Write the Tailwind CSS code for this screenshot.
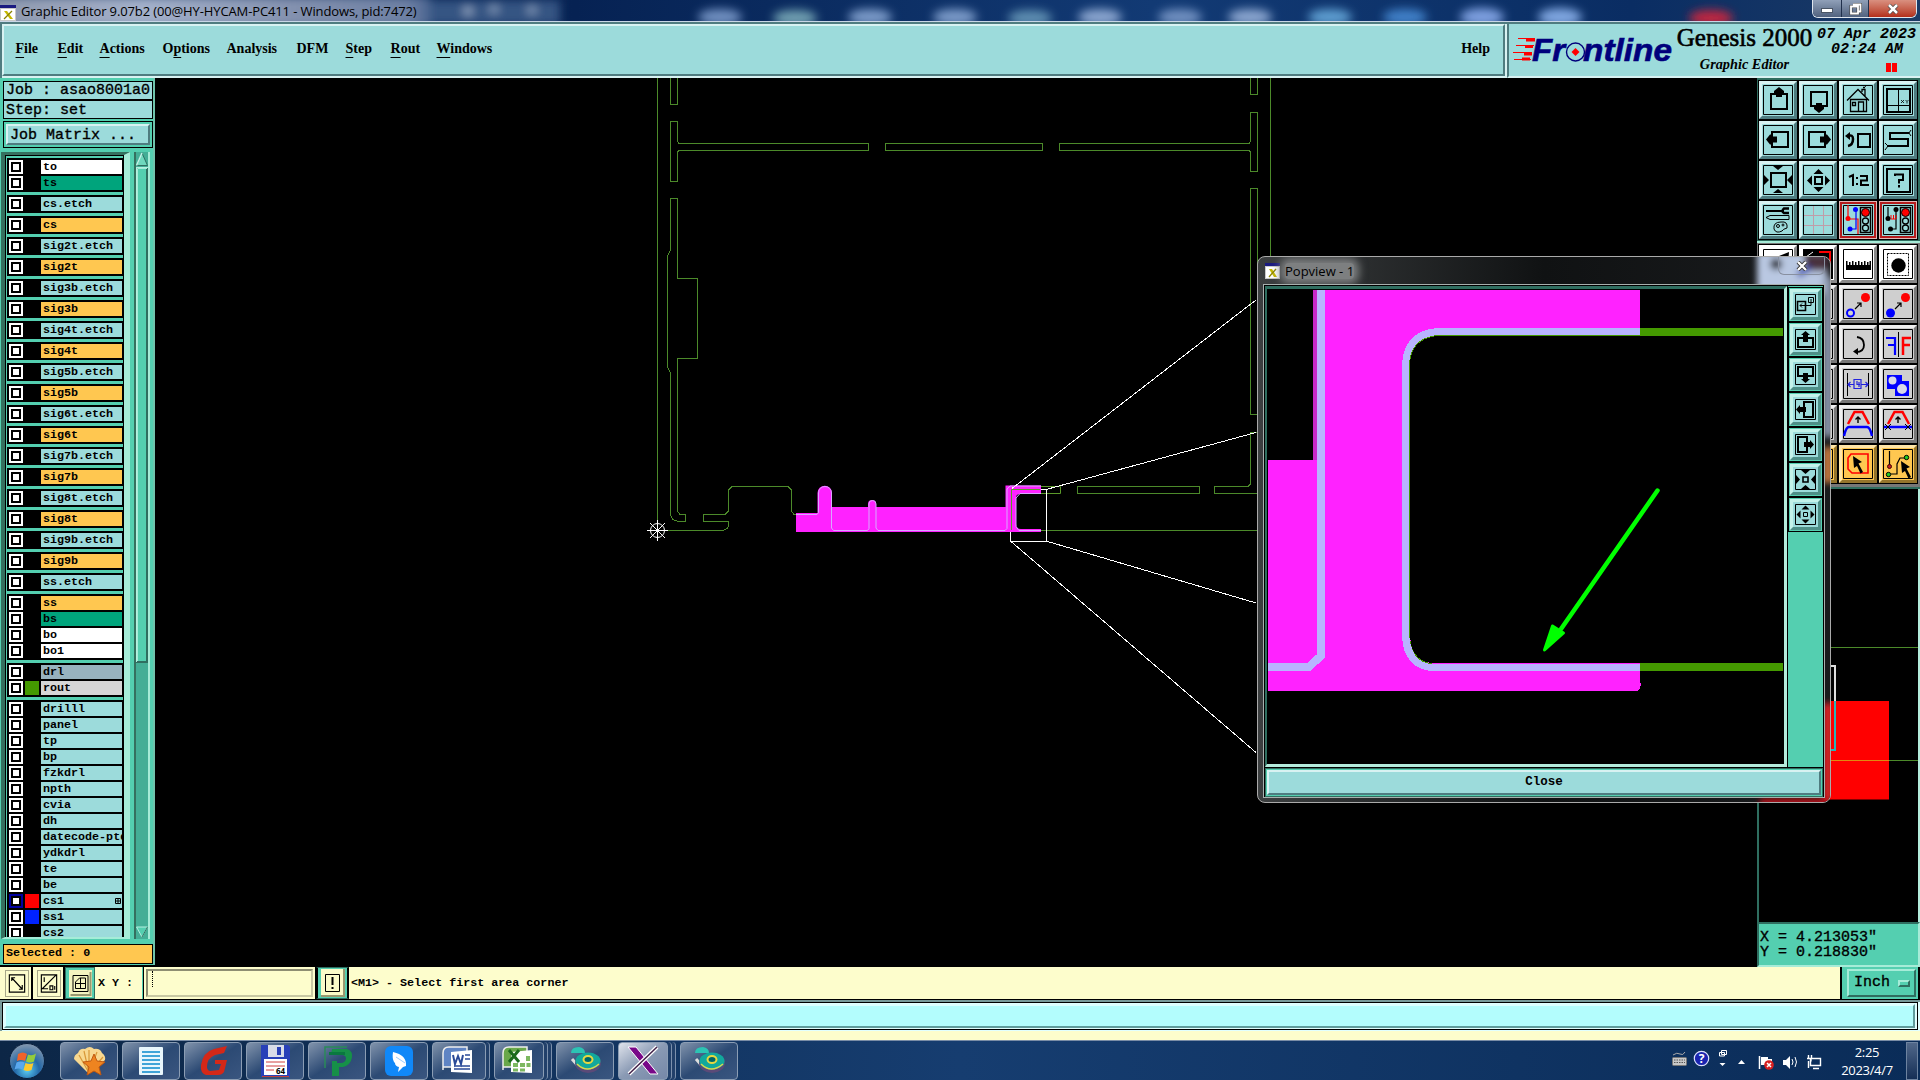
<!DOCTYPE html>
<html lang="en">
<head>
  <meta charset="UTF-8" />
  <meta name="viewport" content="width=device-width, initial-scale=1.0"/>
  <title>Graphic Editor</title>
  <script src="https://cdn.jsdelivr.net/npm/@tailwindcss/browser@4"></script>
</head>
<body class="bg-black w-[1920px] h-[1080px] overflow-hidden flex flex-col relative text-black font-['Liberation_Mono',monospace]">

  <!-- Title bar -->
  <header class="h-[22px] shrink-0 flex items-start justify-between border-b border-[#c9d6e6] bg-[#0c2a5a] relative overflow-hidden font-['Open_Sans',sans-serif]">
    <svg class="absolute inset-0" width="1920" height="21">
      <defs>
        <linearGradient id="haze" x1="0" x2="1" y1="0" y2="0">
          <stop offset="0" stop-color="#8d97ac"/><stop offset=".35" stop-color="#a3b0ca"/><stop offset=".7" stop-color="#8290ae"/><stop offset=".95" stop-color="#6d80a4"/><stop offset="1" stop-color="#4a6490"/>
        </linearGradient>
        <linearGradient id="titleBg" x1="0" x2="1" y1="0" y2="0">
          <stop offset="0" stop-color="#14345f"/><stop offset=".3" stop-color="#062253"/><stop offset=".6" stop-color="#123a74"/><stop offset=".85" stop-color="#0a2d63"/><stop offset="1" stop-color="#1c3b66"/>
        </linearGradient>
        <filter id="soft" x="-30%" y="-50%" width="160%" height="200%"><feGaussianBlur stdDeviation="5"/></filter>
      </defs>
      <rect width="1920" height="21" fill="url(#titleBg)"/>
      <g filter="url(#soft)">
        <rect x="430" y="0" width="130" height="25" fill="#345583"/>
        <rect x="-10" y="-4" width="440" height="32" fill="url(#haze)"/>
        <circle cx="468" cy="11" r="5" fill="#8da2c0"/><circle cx="494" cy="9" r="5" fill="#7d94b5"/><circle cx="532" cy="10" r="5" fill="#7d94b5"/>
        <ellipse cx="720" cy="17" rx="22" ry="8" fill="#6f8fc0"/><ellipse cx="795" cy="18" rx="22" ry="8" fill="#6f9fb0"/>
        <ellipse cx="870" cy="17" rx="22" ry="8" fill="#7a9ac8"/><ellipse cx="955" cy="17" rx="22" ry="8" fill="#7a9ac8"/>
        <ellipse cx="1030" cy="18" rx="22" ry="8" fill="#5d8db0"/><ellipse cx="1100" cy="17" rx="22" ry="8" fill="#8aa5cf"/>
        <ellipse cx="1180" cy="17" rx="22" ry="8" fill="#6f8fc0"/><ellipse cx="1250" cy="17" rx="22" ry="8" fill="#8aa5cf"/>
        <ellipse cx="1330" cy="17" rx="22" ry="8" fill="#5d9dd0"/><ellipse cx="1405" cy="17" rx="22" ry="8" fill="#3f80c8"/>
        <ellipse cx="1482" cy="17" rx="22" ry="9" fill="#7d9fdf"/><ellipse cx="1560" cy="17" rx="22" ry="9" fill="#7fa6e0"/>
        <ellipse cx="1711" cy="18" rx="22" ry="8" fill="#c02840"/>
      </g>
    </svg>
    <div class="relative flex items-center h-[21px]">
      <svg width="16" height="16" class="mt-1"><rect width="16" height="16" fill="#c8c8c8"/><rect width="16" height="3" fill="#1a1a80"/><rect x="1" y="4" width="14" height="11" fill="#fff"/><path d="M4 6h3l6 8h-3z" fill="#c5b800"/><path d="M12 6L4 14" stroke="#8a8200" stroke-width="1.3"/></svg>
      <span class="pl-[5px] text-[13px] leading-5 tracking-[-0.12px] whitespace-nowrap">Graphic Editor 9.07b2 (00@HY-HYCAM-PC411 - Windows, pid:7472)</span>
    </div>
    <div class="relative flex h-[18px] mr-[3px] border border-t-0 border-[#dfe6ee] rounded-b-md overflow-hidden">
      <div class="w-[29px] bg-linear-to-b from-[#90a0b8] to-[#52637f] border-r border-[#20304c] flex items-center justify-center pt-1"><i class="w-3 h-[5px] bg-white border border-gray-600"></i></div>
      <div class="w-[27px] bg-linear-to-b from-[#90a0b8] to-[#52637f] border-r border-[#20304c] flex items-center justify-center">
        <svg width="13" height="12" fill="none"><path d="M4 1.500h7.500v7h-2M2 3.500h7v7H2z" stroke="#444" stroke-width="3"/><path d="M4 1.500h7.500v7h-2M2 3.500h7v7H2z" stroke="#fff" stroke-width="1.800"/></svg>
      </div>
      <div class="w-[47px] bg-linear-to-b from-[#d99080] to-[#b32d18] flex items-center justify-center">
        <svg width="12" height="10"><path d="M2 1l8 8M10 1L2 9" stroke="#444" stroke-width="4"/><path d="M2 1l8 8M10 1L2 9" stroke="#fff" stroke-width="2.500"/></svg>
      </div>
    </div>
  </header>

  <!-- Menu bar and product logo -->
  <div class="h-14 shrink-0 flex font-['Liberation_Serif',serif] bg-[#d8f2f2]">
    <nav class="w-[1507px] border-t-2 border-l-2 border-[#4f7c80] border-b-0 flex pb-0.5 pr-0.5">
      <div class="flex-1 flex items-center bg-[#9cdbdb] border-2 border-t-[#d8f2f2] border-l-[#d8f2f2] border-b-[#4f7c80] border-r-[#4f7c80] pl-[11.500px] pr-[13px] pb-0.5 text-[14px] font-bold leading-5">
        <span class="w-[42px]"><u class="underline-offset-4">F</u>ile</span>
        <span class="w-[42px]"><u class="underline-offset-4">E</u>dit</span>
        <span class="w-[63px]"><u class="underline-offset-4">A</u>ctions</span>
        <span class="w-16">O<u class="underline-offset-4">p</u>tions</span>
        <span class="w-[70px]">Analysis</span>
        <span class="w-[49px]">DFM</span>
        <span class="w-[45px]"><u class="underline-offset-4">S</u>tep</span>
        <span class="w-[46px]"><u class="underline-offset-4">R</u>out</span>
        <span><u class="underline-offset-4">W</u>indows</span>
        <span class="ml-auto">Help</span>
      </div>
    </nav>
    <div class="flex-1 flex border-t-2 border-l-2 border-t-[#4f7c80] border-l-[#4f7c80] border-b-2 border-b-[#d8f2f2] bg-[#9cdbdb]">
      <svg width="162" height="52" viewBox="1509 24 162 52" class="overflow-visible shrink-0">
        <g stroke="#f00" fill="none"><path d="M1518 38.500h17M1516 45.500h18M1513 52.500h19M1514 59.500h17"/><path d="M1526 40h9M1525 46.500h8M1524 54h8M1522 59h8" stroke-width="3"/></g>
        <g font-family="Liberation Sans, sans-serif" font-weight="bold" font-style="italic" font-size="31" fill="#00007c" stroke="#00007c" stroke-width=".6">
          <text x="1532" y="60.500" textLength="33" lengthAdjust="spacingAndGlyphs">Fr</text>
          <text x="1583" y="60.500" textLength="89" lengthAdjust="spacingAndGlyphs">ntline</text>
        </g>
        <circle cx="1575.500" cy="52" r="9" fill="none" stroke="#00007c" stroke-width="1.400"/><path d="M1575.500 48l4 4-4 4-4-4z" fill="#f00"/>
      </svg>
      <div class="w-[143px] ml-0.5 flex flex-col items-center shrink-0">
        <span class="text-[25px] leading-7 whitespace-nowrap [-webkit-text-stroke:0.6px_black]">Genesis 2000</span>
        <span class="text-[14.300px] leading-5 pt-0.5 font-bold italic whitespace-nowrap">Graphic Editor</span>
      </div>
      <div class="flex-1 text-[15px] leading-[15px] italic pt-[3px] pr-1 font-['Liberation_Mono',monospace] font-bold whitespace-nowrap flex flex-col items-end">
        <span>07 Apr 2023</span>
        <span class="pr-[13px]">02:24 AM</span>
        <span class="flex gap-px mr-[19px] mt-[6px]"><i class="w-[5px] h-[9px] bg-[#f00]"></i><i class="w-[5px] h-[9px] bg-[#f00]"></i></span>
      </div>
    </div>
  </div>

  <main class="h-[889px] shrink-0 flex">
    <!-- Layer list -->
    <aside class="w-[155px] h-[887px] shrink-0 bg-[#54cfb0] px-[3px] pt-[3px] border-r-2 border-[#6fc4ac] flex flex-col">
      <div class="h-[19px] shrink-0 border border-black bg-[#9cdbdb] pl-0.5 text-[15px] leading-[18px] whitespace-pre w-[150px] [-webkit-text-stroke:0.35px_black]">Job : asao8001a0</div>
      <div class="h-[19px] shrink-0 border border-black bg-[#9cdbdb] pl-0.5 text-[15px] leading-[19px] whitespace-pre w-[150px] [-webkit-text-stroke:0.35px_black]">Step: set</div>
      <div class="h-[27px] shrink-0 mt-0.5 border border-black p-0.5 w-[150px]">
        <div class="h-full bg-[#9cdbdb] border-2 border-t-[#d8f2f2] border-l-[#d8f2f2] border-b-[#4f7c80] border-r-[#4f7c80] pl-0.5 text-[15px] leading-5 whitespace-pre [-webkit-text-stroke:0.35px_black]">Job Matrix ...</div>
      </div>
      <div class="h-[787px] shrink-0 mt-1 -ml-0.5 flex">
        <div class="w-[133px] flex border-l-4 border-t-3 border-l-[#35705f] border-t-[#35705f] border-b-2 border-b-[#a6ecd8] border-r-[6px] border-r-[#a6ecd8] overflow-hidden">
          <div id="layers" class="w-[121px] border-l border-t border-r border-black pt-0.5 pl-px flex flex-col gap-[3px] overflow-hidden"></div>
        </div>
        <div class="w-4 ml-1 bg-[#44ae96] border-l-2 border-r-2 border-l-[#35705f] border-r-[#a6ecd8] flex flex-col items-center justify-between">
          <svg width="12" height="511" class="shrink-0"><path d="M.5 13.500L6 1l5.500 12.500z" fill="#6fd8bd" stroke="#2f6e60"/><path d="M.5 13.500L6 1" stroke="#c0f5e8" stroke-width="1.500"/><rect y="15" width="12" height="496" fill="#2f6e60"/><path d="M0 15h12v1H1v494H0z" fill="#b4f0e0"/><rect x="2" y="17" width="8" height="492" fill="#54cfb0"/><path d="M1.500 509V16.500H11" fill="none" stroke="#a6ecd8"/></svg>
          <svg width="12" height="13" class="shrink-0"><path d="M.5 1h11L6 11z" fill="#54cfb0" stroke="#b4f0e0"/><path d="M11.500 1L6 11" stroke="#2f6e60"/></svg>
        </div>
      </div>
      <div class="h-5 shrink-0 mt-[5px] w-[150px] border border-black bg-[#ffc750] pl-0.5 text-[11.700px] font-bold leading-[17px] whitespace-pre">Selected : 0</div>
    </aside>

    <!-- Drawing area -->
    <svg width="1602" height="889" viewBox="155 78 1602 889" class="shrink-0">
      <g fill="none" stroke="#4c8a2a" stroke-width="1" shape-rendering="crispEdges">
        <path d="M657.500 78V530.500H722Q728.500 530 728.500 524V521.500H703.500V514.500H725L728.500 511V490L732 486.500H788L791.500 490V511L794 514.500H818"/>
        <path d="M670.500 78V104.500H677.500V78M1250.500 78V94.500H1257.500V78M1270.500 78V530.500H876"/>
        <path d="M677.500 141V121.500H670.500V181.500H677.500V152L679 150.500H868.500V143.500H679z"/>
        <path d="M885.500 143.500H1042.500V150.500H885.500zM1249 143.500H1059.500V150.500H1249L1250.500 152V171.500H1257.500V112.500H1250.500V141z"/>
        <path d="M677.500 278.500V198.500H670.500V250L667.500 256V367L670.500 373V512Q670.500 521.500 680 521.500H685.500V514.500H680L677.500 511V358.500H697.500V278.500z"/>
        <path d="M1250.500 188.500H1257.500V414.500H1250.500zM1250.500 484V432.500H1257.500V493.500H1214.500V486.500H1248zM1077.500 486.500H1199.500V493.500H1077.500z"/>
      </g>
      <path d="M796 513h21.500V493a7 7 0 0 1 14.500 0v14h36v-3a4 4 0 0 1 8 0v3h129.500V485.500H1041V494h-21q-4 0-4 4v26q0 5 5 5h20v3H796z" fill="#ff22ff"/>
      <g fill="none" stroke="#d8a8ff"><path d="M796 514.500h21l1.500-2V493a6.500 6.500 0 0 1 13 0v35l2 2.500h34l1.500-2V504a3.500 3.500 0 0 1 7 0v24l2 2.500h127l2-2V489l3-3H1041M1041 530.500h-22l-3-4V498l4-4.500H1041"/></g>
      <path d="M1011.500 530V489.500H1040M1041 486.500h19.500v7H1041" fill="none" stroke="#5b9a2a"/>
      <g fill="none" stroke="#fff" shape-rendering="crispEdges"><path d="M1041 489.500h5.500v51.500H1010.500V532"/><path d="M1012 488.500L1256 300M1046 489.500L1256 432.500M1046 541L1256 603M1010.500 541L1256 752.500"/></g>
      <g fill="none" stroke="#fff"><circle cx="657.500" cy="530.500" r="7"/><path d="M647 530.500h21M657.500 520v21M650 523l15 15M665 523l-15 15"/></g>
    </svg>

    <!-- Tool buttons, overview and coordinates -->
    <aside class="w-[163px] shrink-0 flex flex-col">
      <div class="h-[165px] shrink-0 bg-[#2f6e60] border-b-2 border-[#a6ecd8] pl-px pt-0.5">
        <div id="viewTools" class="w-40 h-40 grid grid-cols-[repeat(4,38px)] content-start bg-black pt-px pl-px gap-0.5"></div>
      </div>
      <div class="h-[246px] shrink-0 bg-[#777] pl-px pt-px border-b-2 border-[#2f6e60]">
        <div id="editTools" class="w-40 h-60 grid grid-cols-[repeat(4,38px)] content-start bg-black pt-px pl-px gap-0.5"></div>
      </div>
      <div class="h-[433px] shrink-0 border-l-2 border-l-[#2f6e60] border-r-2 border-r-[#b4ecdc]">
        <svg width="159" height="433" viewBox="1759 489 159 433">
          <rect x="1759" y="701" width="130" height="98.500" fill="#f00"/>
          <path d="M1759 647.500h159" stroke="#4c8a2a"/><path d="M1759 760.500h130" stroke="#e08a10"/><path d="M1889 760.500h29" stroke="#4c8a2a"/>
          <path d="M1830 666h5v35" fill="none" stroke="#ddd" stroke-width="2"/><path d="M1835 701v49h-5" fill="none" stroke="#28b4b8" stroke-width="2"/>
        </svg>
      </div>
      <div class="h-[45px] shrink-0 border-2 border-t-[#2f6e60] border-l-[#2f6e60] border-b-[#a6ecd8] border-r-[#a6ecd8] bg-[#54cfb0] pl-px pt-[6px] text-[15px] leading-[15px] whitespace-pre [-webkit-text-stroke:0.35px_black]">X = 4.213053"<br>Y = 0.218830"</div>
    </aside>
  </main>

  <!-- Status row -->
  <section class="h-[33px] shrink-0 flex bg-[#fdfdcc] border-b border-black text-[11.700px]">
    <div class="w-[33px] border-r-2 border-black flex items-center justify-center pl-0.5"><svg width="24" height="27" class="border border-[#a8a888]" viewBox="-1.500 -2.500 23 26"><path d="M2 1.500h16v18H2zM4.500 4.500l11 12M4.500 8V4.500H8M15.500 12v4.500H12" fill="none" stroke="#000" stroke-width="1.200"/></svg></div>
    <div class="w-8 border-r-2 border-black flex items-center justify-center pl-px"><svg width="24" height="27" class="border border-[#a8a888]" viewBox="-1.500 -2.500 23 26"><path d="M2 1.500h16v18H2zM17 2L3 16h6M5 4v5M11 13h3v4h-3zM16 13v4" fill="none" stroke="#000" stroke-width="1.200"/></svg></div>
    <div class="w-[30px] bg-[#54cfb0] border border-[#2f6e60] flex items-center justify-center"><svg width="23" height="27" viewBox="-1.500 -3 23 27"><path d="M-1.500-3h23v27h-23z" fill="#f3f3c0"/><path d="M20 -1v23H0" fill="none" stroke="#999970" stroke-width="2"/><path d="M2.500 2.500h15v16h-15zM5 15.500V9l4-4h6v10.500zM5 10.500h10M10 5v10.500" fill="none" stroke="#000"/></svg></div>
    <div class="w-12 border-r border-[#54cfb0] pl-[3px] leading-[33px] font-bold whitespace-pre">X Y :</div>
    <div class="w-[173px] p-0.5 border-x border-black">
      <div class="h-full border-2 border-t-[#8e8e72] border-l-[#8e8e72] border-b-[#c9c9a3] border-r-[#c9c9a3] pl-1"><i class="block w-px h-4 border-l border-dotted border-black"></i></div>
    </div>
    <div class="w-[33px] bg-[#54cfb0] border-x-2 border-x-black border-y border-y-[#2f6e60] flex items-center justify-center"><svg width="24" height="28"><path d="M0 0h24v28H0z" fill="#fbfbc8"/><path d="M23 0v27H0" fill="none" stroke="#999970" stroke-width="2"/><path d="M4.500 5.500h14v17h-14z" fill="none" stroke="#000"/><path d="M11.500 8v8M11.500 18v2" stroke="#000" stroke-width="2"/></svg></div>
    <div class="flex-1 pl-0.5 leading-[33px] font-bold whitespace-pre">&lt;M1&gt; - Select first area corner</div>
    <div class="w-20 bg-[#54cfb0] border-x-2 border-black p-0.5 pl-[5px]">
      <div class="h-full border-2 border-t-[#a6ecd8] border-l-[#a6ecd8] border-b-[#2f6e60] border-r-[#2f6e60] flex items-center justify-between pl-[5px] pr-1 text-[15px] [-webkit-text-stroke:0.35px_black]">Inch<i class="w-3 h-[7px] border-2 border-t-[#a6ecd8] border-l-[#a6ecd8] border-b-[#2f6e60] border-r-[#2f6e60]"></i></div>
    </div>
  </section>
  <section class="h-10 shrink-0 bg-[#fdfdcc] pb-[9px]">
    <div class="h-full border-t-2 border-l-2 border-[#789a9a] bg-[#e0ffff] pr-0.5 pb-px"><div class="h-full border border-black p-px pr-0.5"><div class="h-full border-2 border-[#dcffff] border-b-[#5f9c9c] border-r-[#5f9c9c] bg-[#b3fdfd]"></div></div></div>
  </section>

  <!-- Taskbar -->
  <footer class="h-10 shrink-0 flex items-center bg-linear-to-r from-[#0c2646] via-[#163d70] to-[#0a2c58] border-t border-[#7a8da6] font-['Open_Sans',sans-serif] text-white">
    <div class="w-[60px] flex pl-2">
      <svg width="38" height="38" viewBox="0 0 38 38">
        <defs><radialGradient id="orb" cx=".5" cy=".75" r=".7"><stop offset="0" stop-color="#5cd0f5"/><stop offset=".5" stop-color="#2368a8"/><stop offset="1" stop-color="#7c93ad"/></radialGradient></defs>
        <circle cx="19" cy="19" r="17.500" fill="url(#orb)" stroke="#0a1f3c"/>
        <path d="M10 12q5-3 9 0l-2 7q-4-2-8 0z" fill="#f0632a"/><path d="M20 12.500q4 2 8-1l-2 8q-4 2-8 0z" fill="#94cc3c"/><path d="M8.500 20.500q4-2 8 0l-2 7q-4-2-8 0z" fill="#5aa8ee"/><path d="M17.500 21q4 2 8 0l-2 7q-4 2-8 0z" fill="#fcc92c"/>
      </svg>
    </div>
    <div id="tasks" class="flex h-[38px]"></div>
    <div class="ml-auto flex items-center h-full">
      <svg width="230" height="38" viewBox="1600 1041 230 38" class="mr-2">
        <rect x="1672.500" y="1056.500" width="14" height="8" rx="1" fill="#c8c8c8" stroke="#777"/><path d="M1674 1059h11M1674 1061.500h11" stroke="#555" stroke-dasharray="1.500 1"/><path d="M1673 1054q4-3 7-1t5-2" fill="none" stroke="#aaa"/>
        <circle cx="1701.500" cy="1057.500" r="7.200" fill="#1a24b0" stroke="#dfe4ff" stroke-width="1.200"/><text x="1701.500" y="1062" text-anchor="middle" font-size="12" font-weight="bold" fill="#fff">?</text>
        <path d="M1721.500 1049.500h5v4h-5zM1719.500 1051.500h5v3.500h-5z" fill="none" stroke="#fff"/><path d="M1719.500 1062h6l-3 3z" fill="#fff"/>
        <path d="M1738 1063h7l-3.500-4z" fill="#fff"/>
        <path d="M1759.500 1055v13" stroke="#fff" stroke-width="1.500"/><path d="M1761 1056h7v2h4v6h-11z" fill="#fff"/><circle cx="1769" cy="1064" r="4.800" fill="#d82020"/><path d="M1767 1062l4 4M1771 1062l-4 4" stroke="#fff" stroke-width="1.500"/>
        <path d="M1783 1059h3l4-4v13l-4-4h-3z" fill="#fff"/><path d="M1792 1058q2 3 0 6M1795 1056q3 5 0 10" fill="none" stroke="#fff"/>
        <path d="M1810.500 1057.500h10v7h-10zM1813 1067.500h6M1808.500 1054v3M1811.500 1054v3M1807 1057.500h4v3M1808.500 1060v7" fill="none" stroke="#fff" stroke-width="1.400"/>
      </svg>
      <div class="w-[58px] text-center text-[13px] leading-[18px] tracking-[-0.3px]"><div>2:25</div><div>2023/4/7</div></div>
      <div class="w-3 h-[38px] ml-[10px] mr-0.5 border border-[#6d83a0] bg-linear-to-b from-[#51688a] to-[#152f56]"></div>
    </div>
  </footer>

  <!-- Popview window -->
  <div class="absolute left-[1257px] top-[256px] w-[574px] h-[547px] rounded-lg border border-[#aaa] bg-linear-to-r from-[#3c3f40] via-[#101213] to-[#191b1d] overflow-hidden">
    <svg class="absolute right-0 top-0" width="90" height="545">
      <defs><filter id="soft2" x="-50%" y="-50%" width="200%" height="200%"><feGaussianBlur stdDeviation="3"/></filter></defs>
      <g filter="url(#soft2)"><rect x="17" y="-5" width="70" height="42" fill="#b9c8e2"/><circle cx="36" cy="7" r="6" fill="#30343c"/><rect x="64" y="-4" width="24" height="18" fill="#48303c"/><path d="M58 18l12-8" stroke="#2a3fae" stroke-width="6"/>
      <rect x="83" y="20" width="10" height="160" fill="#8c98ae"/><rect x="83" y="190" width="10" height="36" fill="#c8783c"/><rect x="83" y="446" width="10" height="110" fill="#e02028"/><rect x="20" y="541" width="70" height="10" fill="#b01018"/></g>
    </svg>
    <div class="relative h-[27px] flex items-start justify-between pl-[7px] pr-[5px]">
      <div class="flex items-center gap-[5px] pt-[6px]">
        <svg width="15" height="16"><rect width="15" height="16" fill="#c8c8c8"/><rect width="15" height="3" fill="#1a1a80"/><rect x="1" y="4" width="13" height="11" fill="#fff"/><path d="M4 6h3l5 8H9z" fill="#c5b800"/><path d="M11 6L4 14" stroke="#8a8200" stroke-width="1.300"/></svg>
        <span class="font-['Open_Sans',sans-serif] text-[13px] leading-4 bg-[#7d7f80] shadow-[0_0_8px_5px_#7d7f80] rounded">Popview - 1</span>
      </div>
      <div class="w-[47px] h-[18px] border border-t-0 border-[#8890a0] rounded-b-md flex items-center justify-center">
        <svg width="12" height="10"><path d="M2 1l8 8M10 1L2 9" stroke="#333" stroke-width="4"/><path d="M2 1l8 8M10 1L2 9" stroke="#fff" stroke-width="2.300"/></svg>
      </div>
    </div>
    <div class="relative ml-[5px] w-[562px] h-[514px] border border-[#a8b0ae] bg-black p-px flex flex-col">
      <div class="h-[481px] shrink-0 flex">
        <div class="w-[522px] border-l-2 border-t-[3px] border-l-[#2f6e60] border-t-[#2f6e60] border-b-[3px] border-r-[3px] border-b-[#b4ecdc] border-r-[#b4ecdc]">
          <svg width="517" height="475" viewBox="1267 289 517 475" shape-rendering="crispEdges">
            <path d="M1268 290h372v391q2 6-2 10H1268V460h45V290z" fill="#ff22ff"/><path d="M1313 290h4v170h-4z" fill="#c828c8"/>
            <path d="M1321 290v366l-12.500 11H1268" fill="none" stroke="#b8b4ff" stroke-width="8"/>
            <path d="M1437 328H1783v8H1437q-27 3-27 30V634q0 26 24 30H1640v-1H1783v8H1431q-27-3-29-34V364q2-33 35-36z" fill="#449900"/>
            <path d="M1437 328H1640v7H1437q-27 3-28 30V634q2 28 22 30H1640v7H1431q-27-3-29-34V364q2-33 35-36z" fill="#b8b4ff"/>
            <path d="M1437 336H1640V663H1431q-21-3-21-30V366q0-27 27-30z" fill="#000"/>
            <path d="M1640 336h143v327h-143z" fill="#000"/>
            <g shape-rendering="auto"><path d="M1657.500 490.500L1561 629" stroke="#0f0" stroke-width="4.500" stroke-linecap="round"/><path d="M1544.500 650L1552.500 626L1563.500 633z" fill="#0f0" stroke="#0f0" stroke-width="3" stroke-linejoin="round"/></g>
          </svg>
        </div>
        <div id="popTools" class="w-[35px] ml-px pt-px bg-[#54cfb0] flex flex-col"></div>
      </div>
      <div class="flex-1 mt-px bg-[#54cfb0] border border-[#2f6e60] p-px">
        <div class="h-full bg-[#9cdbdb] border-2 border-t-[#d8f2f2] border-l-[#d8f2f2] border-b-[#4f7c80] border-r-[#4f7c80] text-center text-[12.500px] font-bold leading-[21px]">Close</div>
      </div>
    </div>
  </div>

  <script>
    // [name, colour, swatch] per row, grouped as in the job matrix
    const T = "bg-[#9cdbdb]", Y = "bg-[#ffc750]", G = "bg-[#00a47c]", W = "bg-white";
    const groups = [[["to", W], ["ts", G]], [["cs.etch", T]], [["cs", Y]]];
    ["2t", "3b", "4t", "5b", "6t", "7b", "8t", "9b"].forEach(n => {
      groups.push([["sig" + n + ".etch", T]], [["sig" + n, Y]]);
    });
    groups.push([["ss.etch", T]]);
    groups.push([["ss", Y], ["bs", G], ["bo", W], ["bo1", W]]);
    groups.push([["drl", "bg-[#98b2be]"], ["rout", "bg-[#d6d6d6]", "bg-[#449900]"]]);
    groups.push(["drilll", "panel", "tp", "bp", "fzkdrl", "npth", "cvia", "dh", "datecode-ptd", "ydkdrl", "te", "be"].map(n => [n, T])
      .concat([["cs1", T, "bg-[#ff0000]"], ["ss1", T, "bg-[#0022ff]"], ["cs2", T]]));

    document.getElementById("layers").innerHTML = groups.map(g =>
      `<div class="w-[117px] shrink-0 bg-black p-0.5 flex flex-col gap-0.5">` + g.map(([name, bg, sw]) =>
        `<div class="h-[14px] flex gap-0.5">
          <div class="w-[14px] p-0.5 ${name === "cs1" ? "bg-[#0000a0]" : "bg-white"}"><div class="h-[10px] border-2 border-black bg-white"></div></div>
          <div class="w-[14px] ${sw || ""}"></div>
          <div class="w-[81px] pl-0.5 overflow-hidden whitespace-nowrap text-[11.700px] font-bold leading-[14px] flex justify-between ${bg}">${name}${name === "cs1" ? `<svg width="6" height="6" class="mt-1 mr-px shrink-0"><path d="M.5 .5h5v5h-5zM3 0v6M0 3h6" fill="none" stroke="#000"/></svg>` : ""}</div>
        </div>`).join("") + `</div>`).join("");

    const k = `fill="none" stroke="#000"`;
    const arrow = {
      up: (x, y) => `<path d="M${x} ${y}l5 4v2h-2v4h-6v-4h-2v-2z"/>`,
      down: (x, y) => `<path d="M${x} ${y}l5-4v-2h-2v-4h-6v4h-2v2z"/>`,
      left: (x, y) => `<path d="M${x} ${y}l4-5h2v2h5v6h-5v2h-2z"/>`,
      right: (x, y) => `<path d="M${x} ${y}l-4-5h-2v2h-5v6h5v2h2z"/>`
    };
    const lights = `<path d="M17.500 2.500h10v25h-10z" fill="#9cdbdb" stroke="#000" stroke-width="1.500"/><circle cx="22.500" cy="7.500" r="4" fill="#f00" stroke="#000"/><circle cx="22.500" cy="16" r="3" ${k} stroke-width="1.300"/><circle cx="22.500" cy="23" r="3" ${k} stroke-width="1.300"/>`;

    const viewIcons = [
      `<path d="M8 9h16v15H8z" ${k} stroke-width="2"/>` + arrow.up(16, 2),
      `<path d="M8 7h16v14H8z" ${k} stroke-width="2"/>` + arrow.down(16, 28),
      `<path d="M4 15.500L15 4.500l11 11M7.500 14.500h16v12h-16zM15.500 26v-9h5v9M9.500 17.500h3v3h-3zM19 7V4.500h3V11M20 2.500h2M22 1h1" ${k} stroke-width="1.300"/>`,
      `<path d="M4 4h23v23H4z" ${k} stroke-width="2"/><path d="M15.500 4v23M4 20.500h23" ${k}/><path d="M18 15l3 3M21 15l-3 3M22.500 15l1.500 1.500 1.500-1.500M24 16.500v2" ${k} stroke-width=".8"/>`,
      `<path d="M9 7h16v15H9z" ${k} stroke-width="2"/>` + arrow.left(3, 14.500),
      `<path d="M6 7h16v15H6z" ${k} stroke-width="2"/>` + arrow.right(28, 14.500),
      `<path d="M15 9h12v13H15z" ${k} stroke-width="2"/><path d="M5 11q5-2 5 3 0 6-5 7" ${k} stroke-width="2.500"/><path d="M2 11l5-4v8z"/>`,
      `<path d="M26 8H7v6h18v7H4" ${k} stroke-width="2"/><path d="M26 8l2-3M26 8l2 3M5 21l-3-3M5 21l-3 4" ${k}/>`,
      `<path d="M8 8h15v14H8z" ${k} stroke-width="2"/><path d="M15 5l-5-4h10zM15 24l5 4H10zM6 15L1 10v10zM24 15l5-5v10z"/>`,
      `<path d="M12 12h7v7h-7z" ${k} stroke-width="2"/><path d="M15.500 4l5 5h-10zM15.500 27l5-5h-10zM4 15.500l5-5v10zM27 15.500l-5-5v10z"/>`,
      `<path d="M6 12l4-2v11M14 12v2M14 18v2M17 11h7v4.500h-6V20h8" ${k} stroke-width="2"/>`,
      `<path d="M4 4h23v23H4z" ${k} stroke-width="2"/><path d="M12 11V9.500h8V15h-4v3.500M16 20v2.500" ${k} stroke-width="2"/>`,
      `<path d="M3 5h18v2H3z"/><path d="M26 3.500h-5q-3 2.500 0 4.500h5" ${k} stroke-width="2.500"/><path d="M3 12.500l4-2h19v4H7z" ${k}/><path d="M11 24q-1-7 7-7 7-1 6 6-4 1-5 3-6 3-8-2z" ${k}/><circle cx="15" cy="21" r="1.500" ${k}/><circle cx="20" cy="20" r="1" ${k}/>`,
      `<path d="M10.500 1v28M20.500 1v28M1 10.500h28M1 20.500h28" fill="none" stroke="#c09ca8"/>`,
      `<path d="M5 0v14h10v15" fill="none" stroke="#f00" stroke-width="1.200"/><path d="M13 4v20H7" fill="none" stroke="#00f" stroke-width="1.200"/><circle cx="5" cy="13.500" r="2.500" fill="#f00"/><circle cx="12.500" cy="4.500" r="2.500" fill="#00f"/><circle cx="7" cy="24" r="2.500" fill="#00f"/>` + lights,
      `<path d="M5 2v12M13 4v20H7" ${k} stroke-width="1.200"/><path d="M8 10v4h5M10.500 10v4M13 10v4" fill="none" stroke="#f00"/><circle cx="5" cy="13.500" r="2.500"/><circle cx="13" cy="4.500" r="2.500"/><circle cx="7.500" cy="24" r="2.500"/>` + lights
    ];
    const redA = `<path d="M5 15L11.500 3h8l6.500 12" fill="none" stroke="#f00" stroke-width="2.500"/><path d="M15 14V8M12.500 10.500L15 8l2.500 2.500" ${k} stroke-width="1.400"/>`;
    const arrow45 = `<path d="M12 20l6-6M14 14h4v4" ${k} stroke-width="1.200"/>`;
    const sel = `<path d="M10 7l9 6-3.500 1.500L20 23l-2.500 1.500L14 17l-3 2z"/>`;
    const editIcons = [
      `<path d="M4 26L22 8" ${k} stroke-width="2"/><path d="M16 7l10-4-1 11z"/>`,
      `<path d="M0 0h30v30H0z"/><path d="M16 3h11v22" fill="none" stroke="#f00" stroke-width="2"/><path d="M3 8l7-5" stroke="#fff"/>`,
      `<path d="M3 16h25v5H3zM3 12h1.500v5H3zM6 13h1.500v4H6zM9 12h1.500v5H9zM12 13h1.500v4H12zM15 12h1.500v5H15zM18 13h1.500v4H18zM21 12h1.500v5H21zM24 13h1.500v4H24zM26.500 12H28v5h-1.500z"/>`,
      `<path d="M4.500 4.500h21v22h-21z" ${k} stroke-dasharray="2 1"/><circle cx="15.500" cy="16.500" r="7.200"/>`,
      ``, ``,
      `<circle cx="22.500" cy="8.500" r="4.500" fill="#f00"/><circle cx="7.500" cy="24" r="3.500" fill="none" stroke="#00f" stroke-width="2"/>` + arrow45,
      `<circle cx="22.500" cy="8.500" r="4.500" fill="#f00"/><circle cx="7.500" cy="24" r="4.500" fill="#00f"/>` + arrow45,
      ``, ``,
      `<path d="M14 8q7 1 7 8t-8 7" ${k} stroke-width="1.800"/><path d="M10 22.500l5-3.500v7z"/>`,
      `<path d="M15.500 3v25" ${k}/><path d="M3 9h9v17M12 16H5" fill="none" stroke="#00f" stroke-width="2.200"/><path d="M28 9h-8v17M20 16h7" fill="none" stroke="#f00" stroke-width="2.500"/>`,
      ``, ``,
      `<path d="M4.500 4v23M25.500 4v23" ${k}/><path d="M11 10.500h7v9h-7zM14 12v3.500h3M16 13v5M11 15.500H5M7.500 13L5 15.500 7.500 18M18 15.500h7M22.500 13l2.500 2.500-2.500 2.500" fill="none" stroke="#2222dd" stroke-width="1.200"/>`,
      `<path d="M4 6h15v6h7v15H12v-7H4z" fill="#00f"/><circle cx="9.500" cy="11.500" r="4" fill="#d8d8e8"/><circle cx="19" cy="20" r="5" fill="#d8d8e8"/>`,
      ``, ``,
      redA + `<path d="M1 27q2-9 5-9h18q3 0 5 9" fill="none" stroke="#00f" stroke-width="2.500"/>`,
      redA + `<path d="M1 18h28" stroke="#00f" stroke-width="2.500"/><path d="M2 15l6 6M8 15l-6 6M22 15l6 6M28 15l-6 6" ${k}/>`,
      ``, ``,
      `<path d="M8 5h17v19H9l-4-4V9z" fill="none" stroke="#f00" stroke-width="1.600"/>` + sel,
      `<path d="M6.500 2v15M8 25h6v-10l3-6h6" ${k} stroke-width="1.200"/><circle cx="6.500" cy="17.500" r="2" fill="#c02020" stroke="#400"/><circle cx="5.500" cy="25.500" r="2.200" fill="#2c2" stroke="#000"/><circle cx="23.500" cy="8.500" r="2.200" fill="#2c2" stroke="#000"/><g transform="translate(8 5)">${sel}</g>`
    ];
    const tone = {
      teal: "bg-[#9cdbdb] border-t-[#d8f2f2] border-l-[#d8f2f2] border-b-[#4f7c80] border-r-[#4f7c80]",
      red: "bg-[#9cdbdb] border-[#b41c1c] outline outline-1 -outline-offset-1 outline-[#e0b8b8]",
      gray: "bg-[#cfcfcf] border-t-[#f0f0f0] border-l-[#f0f0f0] border-b-[#777] border-r-[#777]",
      white: "bg-white border-t-white border-l-white border-b-[#888] border-r-[#888]",
      gold: "bg-[#ffc750] border-t-[#ffe6a8] border-l-[#ffe6a8] border-b-[#94742c] border-r-[#94742c]"
    };
    const button = (icon, t) => `<div class="w-[38px] h-[38px] border-[3px] p-px ${tone[t]}"><svg width="30" height="30"><path d="M.5 .5h29v29H.5z" ${k}/>${icon}</svg></div>`;
    document.getElementById("viewTools").innerHTML = viewIcons.map((s, i) => button(s, i > 13 ? "red" : "teal")).join("");
    document.getElementById("editTools").innerHTML = editIcons.map((s, i) => button(s, i < 4 ? "white" : i > 19 ? "gold" : "gray")).join("");

    const popIcons = [
      `<path d="M2.500 7.500h8v9h-8z" ${k} stroke-width="1.600"/><path d="M13.500 3.500h5v5h-5zM16 5v6.500H5M7 9.500l-2 2 2 2" ${k}/>`,
      `<path d="M3 9h15v9H3z" ${k} stroke-width="2"/><path d="M10.500 2l4.500 4h-2v7H8V6H6z"/>`,
      `<path d="M3 3h15v9H3z" ${k} stroke-width="2"/><path d="M10.500 19l4.500-4h-2V9H8v6H6z"/>`,
      `<path d="M9 3h9v15H9z" ${k} stroke-width="2"/><path d="M1 10.500L5 6v2h6v5H5v2z"/>`,
      `<path d="M3 3h9v15H3z" ${k} stroke-width="2"/><path d="M19 10.500L15 6v2H9v5h6v2z"/>`,
      `<path d="M8 8h5v5H8z" ${k} stroke-width="1.600"/><path d="M10.500 5L6 1h9zM10.500 16L6 20h9zM5 10.500L1 6v9zM16 10.500L20 6v9z"/>`,
      `<path d="M8.500 8.500h4v4h-4z" ${k}/><path d="M10.500 1.500l4 4h-8zM10.500 19.500l4-4h-8zM1.500 10.500l4-4v8zM19.500 10.500l-4-4v8z"/>`
    ];
    document.getElementById("popTools").innerHTML = popIcons.map(s =>
      `<div class="h-[35px] border border-black p-px"><div class="w-[31px] h-[31px] border-[3px] p-0.5 bg-[#9cdbdb] border-t-[#c4f2ea] border-l-[#c4f2ea] border-b-[#4f9088] border-r-[#4f9088]"><svg width="21" height="21"><path d="M.5 .5h20v20H.5z" ${k}/>${s}</svg></div></div>`).join("");

    // Taskbar icons, 36px box; second value is the button width, third the number of stacked edges
    const disc = `<path d="M4 10q0-6 8-6 6 1 6 6z" fill="#2cc4b4"/><path d="M5 16l7 8" stroke="#ddd" stroke-width="3"/><ellipse cx="21" cy="20" rx="13" ry="10" fill="#5a4a78"/><ellipse cx="21" cy="18" rx="12.500" ry="8.500" fill="#12a89c"/><path d="M10 21q10 10 22 0" fill="none" stroke="#d8d850" stroke-width="1.500"/><ellipse cx="21" cy="16.500" rx="4.500" ry="3.500" fill="#066" stroke="#e8d840" stroke-width="2"/>`;
    const office = (c, t) => `<path d="M2 27V10q0-6 6-6h18v20H2z" fill="${c}" stroke="#eee" stroke-width="1.500"/><path d="M10 9l21-2v23l-21-1z" fill="#fff"/>${t}`;
    const tasks = [
      [`<path d="M18 31L3 16q0-4 4-6 2-5 7-4 5-4 9 0 6-1 8 4 4 3 3 7z" fill="#f8d890"/><path d="M18 30L8 12M18 30L13 8M18 30V7M18 30L26 9M18 30L32 14" stroke="#d89838" stroke-width="1.200"/><path d="M23 11l3 7 8 1-6 5 2 8-7-4-7 4 2-8-6-5 8-1z" fill="#ee8420" stroke="#c05810"/>`, 58, 0],
      [`<rect x="6" y="4" width="24" height="28" rx="1" fill="#e8f6fc"/><path d="M9 9h18M9 13h18M9 17h18M9 21h18M9 25h18M9 29h18" stroke="#3fa4d8" stroke-width="2"/>`, 58, 0],
      [`<path d="M32 3l-3 7-9 2q-8 3-8 12 0 3 3 4l9-1 2-6h-6v-4h12l-3 12q-2 3-6 3H11q-6-2-5-10Q8 9 19 6z" fill="#d42818"/>`, 58, 0],
      [`<path d="M4 2h27l2 2v30H4z" fill="#2840b8"/><rect x="11" y="2" width="16" height="12" fill="#d8dce8"/><rect x="20" y="4" width="4" height="8" fill="#2840b8"/><rect x="7" y="16" width="23" height="16" fill="#fff"/><path d="M9 19h19M9 23h19M9 27h8" stroke="#d04040"/><text x="19" y="30.500" font-size="8" font-weight="bold">64</text><path d="M5 33.500h27" stroke="#c04040"/>`, 58, 0],
      [`<path d="M6 25V4h22" fill="none" stroke="#2a8a58" stroke-width="1.500"/><path d="M13 6h15q6 2 5 8-1 8-9 10h-4v9h-7V18h5v2h5q4-1 4-5 0-2-3-3H12z" fill="#169048"/><path d="M10 9h16v3H10z" fill="#0a7840"/>`, 58, 0],
      [`<rect x="4" y="3" width="28" height="30" rx="6" fill="#1088f8"/><path d="M12 9q14 3 13 14l-3 1-5 5 1-5q-4-1-4-4l-1-1q-2-4-1-10z" fill="#fff"/><path d="M15 14l9 6" stroke="#9cf" />`, 58, 0],
      [office("#5f84c4", `<path d="M12 12l2 9 3-8 3 8 2-9" fill="none" stroke="#2a4a98" stroke-width="2"/><path d="M24 12h5M24 16h5M13 23h16M13 26h16" stroke="#2a4a98" stroke-width="1.500"/>`), 54, 2],
      [office("#6aa84a", `<path d="M12 20h5v4h-5zM19 20h5v4h-5zM25.500 20h4v4h-4zM12 25.500h5v3h-5zM19 25.500h5v3h-5zM25 13h4v5h-4z" fill="#7cb860"/><path d="M8 7l10 12M18 7L8 19" stroke="#1c6a1c" stroke-width="3"/>`), 50, 4],
      [disc, 58, 0],
      [`<path d="M3 4h8l22 27h-8z" fill="#780888" stroke="#fff"/><path d="M32 4L4 31" stroke="#fff" stroke-width="4"/><path d="M32 4L4 31" stroke="#402048" stroke-width="1.500"/>`, 50, 4, 1],
      [disc, 58, 0]
    ];
    document.getElementById("tasks").innerHTML = tasks.map(([s, w, n, active]) =>
      `<div class="flex mr-1"><div class="h-[38px] rounded-sm border border-[#8b9db4] flex items-center justify-center bg-linear-to-br ${active ? "from-[#e0e4ec] via-[#8a9ab4] to-[#7688a8]" : "from-[#8193ab] via-[#2c4a74] to-[#3a5680]"}" style="width:${w}px"><svg width="36" height="36">${s}</svg></div>` +
      (n ? `<div class="w-1 border-r border-[#7c90ac] rounded-r-sm bg-[#22406a]"></div>` : "") +
      (n > 2 ? `<div class="w-1 border-r border-[#7c90ac] rounded-r-sm bg-[#22406a]"></div>` : "") + `</div>`).join("");
  </script>
</body>
</html>
